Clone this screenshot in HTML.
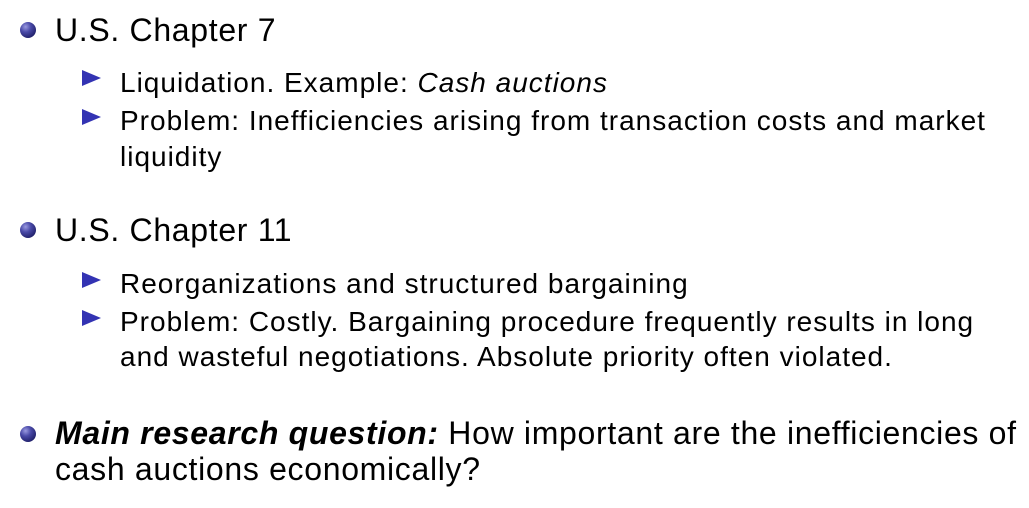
<!DOCTYPE html>
<html><head><style>
body{margin:0;width:1029px;height:508px;background:#fff;position:relative;overflow:hidden;font-family:"Liberation Sans",Arial,sans-serif;color:#000}
.t{position:absolute;white-space:nowrap;line-height:1}
.m{font-size:32px;left:55px;letter-spacing:0.68px}
.s{font-size:28px;left:120px;letter-spacing:1.0px}
.ball{position:absolute;width:16px;height:16px;border-radius:50%;background:radial-gradient(circle at 35% 30%,#9a9ae0 0%,#4a4aa8 35%,#1d1d66 80%,#15154a 100%)}
.tri{position:absolute;width:0;height:0;border-top:8px solid transparent;border-bottom:8px solid transparent;border-left:19px solid #3333b3}
</style></head><body>
<div class="ball" style="left:20px;top:22px"></div>
<div class="t m" style="top:14px">U.S. Chapter 7</div>
<div class="tri" style="left:82px;top:70px"></div>
<div class="t s" style="top:69px">Liquidation. Example: <i>Cash auctions</i></div>
<div class="tri" style="left:82px;top:109px"></div>
<div class="t s" style="top:107px">Problem: Inefficiencies arising from transaction costs and market</div>
<div class="t s" style="top:143px">liquidity</div>

<div class="ball" style="left:20px;top:222px"></div>
<div class="t m" style="top:214px">U.S. Chapter 11</div>
<div class="tri" style="left:82px;top:272px"></div>
<div class="t s" style="top:270px">Reorganizations and structured bargaining</div>
<div class="tri" style="left:82px;top:310px"></div>
<div class="t s" style="top:308px">Problem: Costly. Bargaining procedure frequently results in long</div>
<div class="t s" style="top:343px">and wasteful negotiations. Absolute priority often violated.</div>

<div class="ball" style="left:20px;top:426px"></div>
<div class="t m" style="top:417px"><b><i>Main research question:</i></b> How important are the inefficiencies of</div>
<div class="t m" style="top:453px">cash auctions economically?</div>
</body></html>
